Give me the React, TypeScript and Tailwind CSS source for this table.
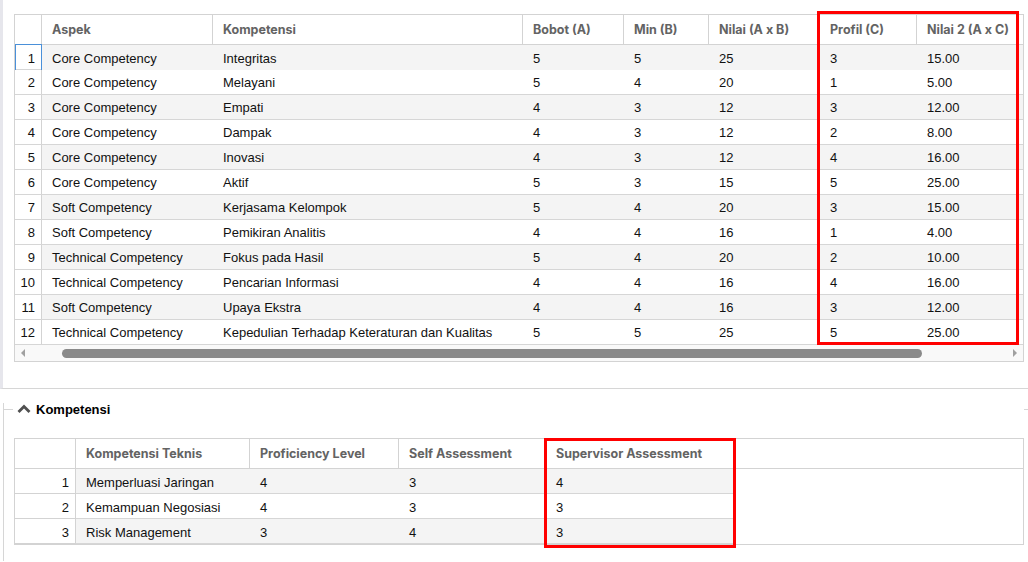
import React from 'react';

const sans = "font-['Liberation_Sans',Arial,sans-serif]";
const head = "font-['Inter',sans-serif] font-bold text-[12.5px] text-[#636363] pt-[2px]";

const rows: [string, string, number, number, number, number, string][] = [
  ['Core Competency', 'Integritas', 5, 5, 25, 3, '15.00'],
  ['Core Competency', 'Melayani', 5, 4, 20, 1, '5.00'],
  ['Core Competency', 'Empati', 4, 3, 12, 3, '12.00'],
  ['Core Competency', 'Dampak', 4, 3, 12, 2, '8.00'],
  ['Core Competency', 'Inovasi', 4, 3, 12, 4, '16.00'],
  ['Core Competency', 'Aktif', 5, 3, 15, 5, '25.00'],
  ['Soft Competency', 'Kerjasama Kelompok', 5, 4, 20, 3, '15.00'],
  ['Soft Competency', 'Pemikiran Analitis', 4, 4, 16, 1, '4.00'],
  ['Technical Competency', 'Fokus pada Hasil', 5, 4, 20, 2, '10.00'],
  ['Technical Competency', 'Pencarian Informasi', 4, 4, 16, 4, '16.00'],
  ['Soft Competency', 'Upaya Ekstra', 4, 4, 16, 3, '12.00'],
  ['Technical Competency', 'Kepedulian Terhadap Keteraturan dan Kualitas', 5, 5, 25, 5, '25.00'],
];

const teknis: [string, number, number, number][] = [
  ['Memperluasi Jaringan', 4, 3, 4],
  ['Kemampuan Negosiasi', 4, 3, 3],
  ['Risk Management', 3, 4, 3],
];

const topCols = 'grid-cols-[27px_171px_310px_101px_85px_111px_97px_140px]';
const botCols = 'grid-cols-[61px_174px_149px_147px_190px_1fr]';

function TopGrid() {
  const headers = ['Aspek', 'Kompetensi', 'Bobot (A)', 'Min (B)', 'Nilai (A x B)', 'Profil (C)', 'Nilai 2 (A x C)'];
  return (
    <div className="relative w-[1010px]">
      <div className="border border-[#d3d3d3] bg-white overflow-hidden">
        <div className="w-[1142px]">
          {/* header */}
          <div className={`grid ${topCols} h-[30px] border-b border-[#d3d3d3]`}>
            <div className="border-r border-[#d3d3d3]" />
            {headers.map((h) => (
              <div key={h} className={`border-r border-[#d3d3d3] pl-2.5 flex items-center whitespace-nowrap ${head}`}>
                {h}
              </div>
            ))}
          </div>
          {/* body */}
          {rows.map((r, i) => (
            <div key={i} className={`grid ${topCols} h-[25px] border-b border-[#d6d6d6] text-[13px] text-[#111] ${sans}`}>
              <div
                className={`flex items-center justify-end pr-1.5 pt-[2px] border-r ${
                  i === 0 ? 'border-[#4a90d9] border-l border-t -mt-px h-[26px] ' : 'border-[#d3d3d3]'
                }`}
              >
                {i + 1}
              </div>
              {r.map((c, j) => (
                <div key={j} className={`flex items-center pl-2.5 pt-[2px] whitespace-nowrap ${i % 2 === 0 ? 'bg-[#f4f4f4]' : 'bg-white'}`}>
                  {c}
                </div>
              ))}
            </div>
          ))}
        </div>
        {/* horizontal scrollbar */}
        <div className="h-[16px] bg-[#f9f9f9] flex items-center">
          <div className="w-[47px] flex items-center pl-[6px]">
            <div className="w-0 h-0 border-y-[4px] border-y-transparent border-r-[4px] border-r-[#a0a0a0]" />
          </div>
          <div className="w-[860px] h-[9px] rounded-full bg-[#8a8a8a]" />
          <div className="flex-1 flex justify-end pr-[6px]">
            <div className="w-0 h-0 border-y-[4px] border-y-transparent border-l-[4px] border-l-[#a0a0a0]" />
          </div>
        </div>
      </div>
      <div className="absolute left-[803px] top-[-3px] w-[202px] h-[334px] border-[3px] border-[#f00] pointer-events-none" />
    </div>
  );
}

function BottomGrid() {
  const headers = ['Kompetensi Teknis', 'Proficiency Level', 'Self Assessment', 'Supervisor Assessment'];
  return (
    <div className="relative w-[1010px]">
      <div className="border border-[#d3d3d3] bg-white">
        <div className={`grid ${botCols} h-[30px] border-b border-[#d3d3d3]`}>
          <div className="border-r border-[#d3d3d3]" />
          {headers.map((h) => (
            <div key={h} className={`border-r border-[#d3d3d3] pl-2.5 flex items-center whitespace-nowrap ${head}`}>
              {h}
            </div>
          ))}
          <div />
        </div>
        {teknis.map((r, i) => (
          <div key={i} className={`grid ${botCols} h-[25px] text-[13px] text-[#111] ${sans}`}>
            <div className="flex items-center justify-end pr-1.5 pt-[3px] border-r border-b border-[#d3d3d3]">{i + 1}</div>
            {r.map((c, j) => (
              <div
                key={j}
                className={`flex items-center pl-2.5 pt-[3px] border-b border-[#d6d6d6] whitespace-nowrap ${i % 2 === 0 ? 'bg-[#f4f4f4]' : 'bg-white'}`}
              >
                {c}
              </div>
            ))}
            <div />
          </div>
        ))}
      </div>
      <div className="absolute left-[530px] top-0 w-[192px] h-[110px] border-[3px] border-[#f00] pointer-events-none" />
    </div>
  );
}

export default function App() {
  return (
    <main className="w-[1028px] h-[562px] bg-white overflow-hidden">
      {/* Top panel */}
      <section className="h-[389px] border-l-[3px] border-l-[#e6e6ec] border-b border-b-[#d6d6d6] pt-[14px] pl-[11px]">
        <TopGrid />
      </section>

      {/* Kompetensi fieldset */}
      <section className="mt-[14px] ml-[3px] border-l border-[#d6d6d6] pb-4">
        <div className="flex items-center h-[12px]">
          <div className="w-[9px] border-t border-[#d6d6d6]" />
          <div className="flex items-center gap-[5px] pl-[4px]">
            <svg width="14" height="10" viewBox="0 0 14 10">
              <polyline points="1.5,8 7,2.5 12.5,8" fill="none" stroke="#505050" strokeWidth="2.8" />
            </svg>
            <span className={`text-[13px] font-bold text-black pt-px ${sans}`}>Kompetensi</span>
          </div>
          <div className="flex-1" />
          <div className="w-[4px] border-t border-[#d6d6d6]" />
        </div>
        <div className="pt-[23px] pl-[10px]">
          <BottomGrid />
        </div>
      </section>
    </main>
  );
}
